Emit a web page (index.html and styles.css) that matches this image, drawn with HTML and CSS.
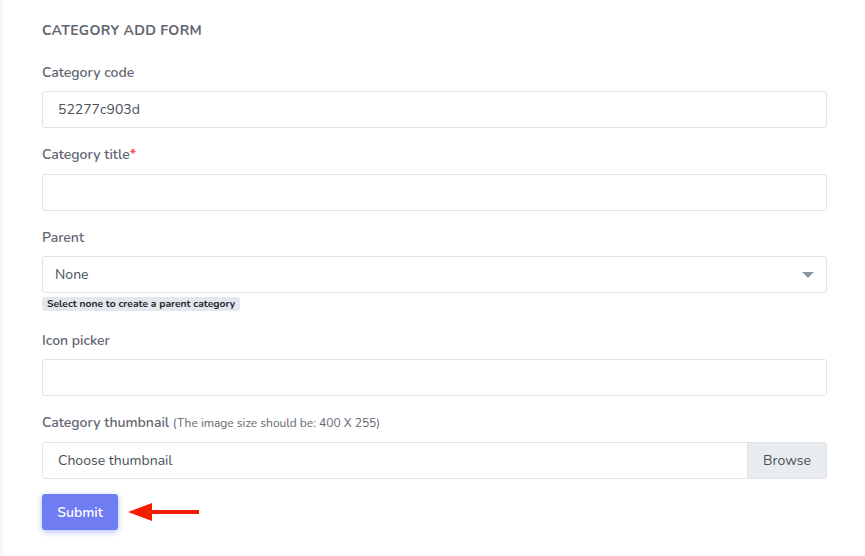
FILE: index.html
```html
<!DOCTYPE html>
<html lang="en">
<head>
<meta charset="utf-8">
<title>Category add form</title>
<link rel="stylesheet" href="styles.css">
</head>
<body>
<div class="page">
  <div class="card">
    <h4 class="card-title">Category Add Form</h4>
    <form class="form">
      <div class="group">
        <label class="label">Category code</label>
        <div class="control"><span class="value value-wide">52277c903d</span></div>
      </div>
      <div class="group">
        <label class="label">Category title<span class="req">*</span></label>
        <div class="control"></div>
      </div>
      <div class="group">
        <label class="label">Parent</label>
        <div class="control select"><span class="value">None</span><span class="caret"></span></div>
        <span class="badge">Select none to create a parent category</span>
      </div>
      <div class="group">
        <label class="label">Icon picker</label>
        <div class="control"></div>
      </div>
      <div class="group">
        <label class="label">Category thumbnail <span class="hint">(The image size should be: 400 X 255)</span></label>
        <div class="control file"><span class="value file-text">Choose thumbnail</span><span class="browse">Browse</span></div>
      </div>
      <div class="actions">
        <button type="button" class="btn">Submit</button>
        <svg class="arrow" width="76" height="22" viewBox="0 0 76 22" aria-hidden="true">
          <polygon points="0,11 24,2 24,9 71,9 71,13 24,13 24,20" fill="#f51d00"/>
        </svg>
      </div>
    </form>
  </div>
</div>
</body>
</html>
```
FILE: styles.css
```css
html, body {
  margin: 0;
  padding: 0;
  background: #f4f6f9;
  font-family: "Nunito", "Lato", "Open Sans", sans-serif;
}
.page {
  padding-left: 3px;
  height: 556px;
  box-sizing: border-box;
}
.card {
  background: #ffffff;
  height: 556px;
  box-sizing: border-box;
  padding: 22px 38px 0 39px;
}
.card-title {
  margin: 0;
  font-size: 14px;
  line-height: 16px;
  padding-top: 1px;
  font-weight: 700;
  text-transform: uppercase;
  letter-spacing: 0.3px;
  color: #5f6670;
}
.form {
  margin-top: 22px;
}
.group {
  display: flex;
  flex-direction: column;
  margin-bottom: 15.5px;
}
.label {
  font-size: 14px;
  line-height: 20px;
  padding-top: 1.5px;
  font-weight: 600;
  color: #5f6670;
  margin-bottom: 8.5px;
}
.req {
  color: #fc544b;
  font-weight: 700;
}
.hint {
  font-size: 12px;
  font-weight: 400;
  color: #5f6670;
}
.control {
  height: 37px;
  box-sizing: border-box;
  border: 1px solid #dfe2e6;
  border-radius: 3px;
  background: #ffffff;
  display: flex;
  align-items: center;
}
.value {
  padding-left: 12px;
  font-size: 14px;
  color: #495057;
}
.value-wide {
  padding-left: 15px;
}
.select {
  justify-content: space-between;
}
.caret {
  width: 0;
  height: 0;
  border-left: 6px solid transparent;
  border-right: 6px solid transparent;
  border-top: 6px solid #8a949c;
  margin-right: 12px;
}
.badge {
  align-self: flex-start;
  margin-top: 4px;
  margin-bottom: 2.5px;
  background: #e3e8ee;
  color: #212529;
  font-size: 10.3px;
  line-height: 14px;
  font-weight: 700;
  padding: 0 5px;
  border-radius: 3px;
}
.file {
  overflow: hidden;
}
.file-text {
  flex: 1;
  padding-left: 15px;
}
.browse {
  height: 100%;
  display: flex;
  align-items: center;
  padding: 0 15px;
  background: #e9ecef;
  border-left: 1px solid #dfe2e6;
  font-size: 14px;
  color: #495057;
}
.actions {
  display: flex;
  align-items: center;
  margin-top: 0.5px;
}
.btn {
  width: 76px;
  height: 36px;
  border: none;
  border-radius: 3px;
  background: #6f7cf2;
  color: #ffffff;
  font-family: inherit;
  font-size: 14px;
  font-weight: 600;
  padding: 1px 0 0;
  box-shadow: 0 2px 6px #b7befa;
}
.arrow {
  margin-left: 10px;
}
```
